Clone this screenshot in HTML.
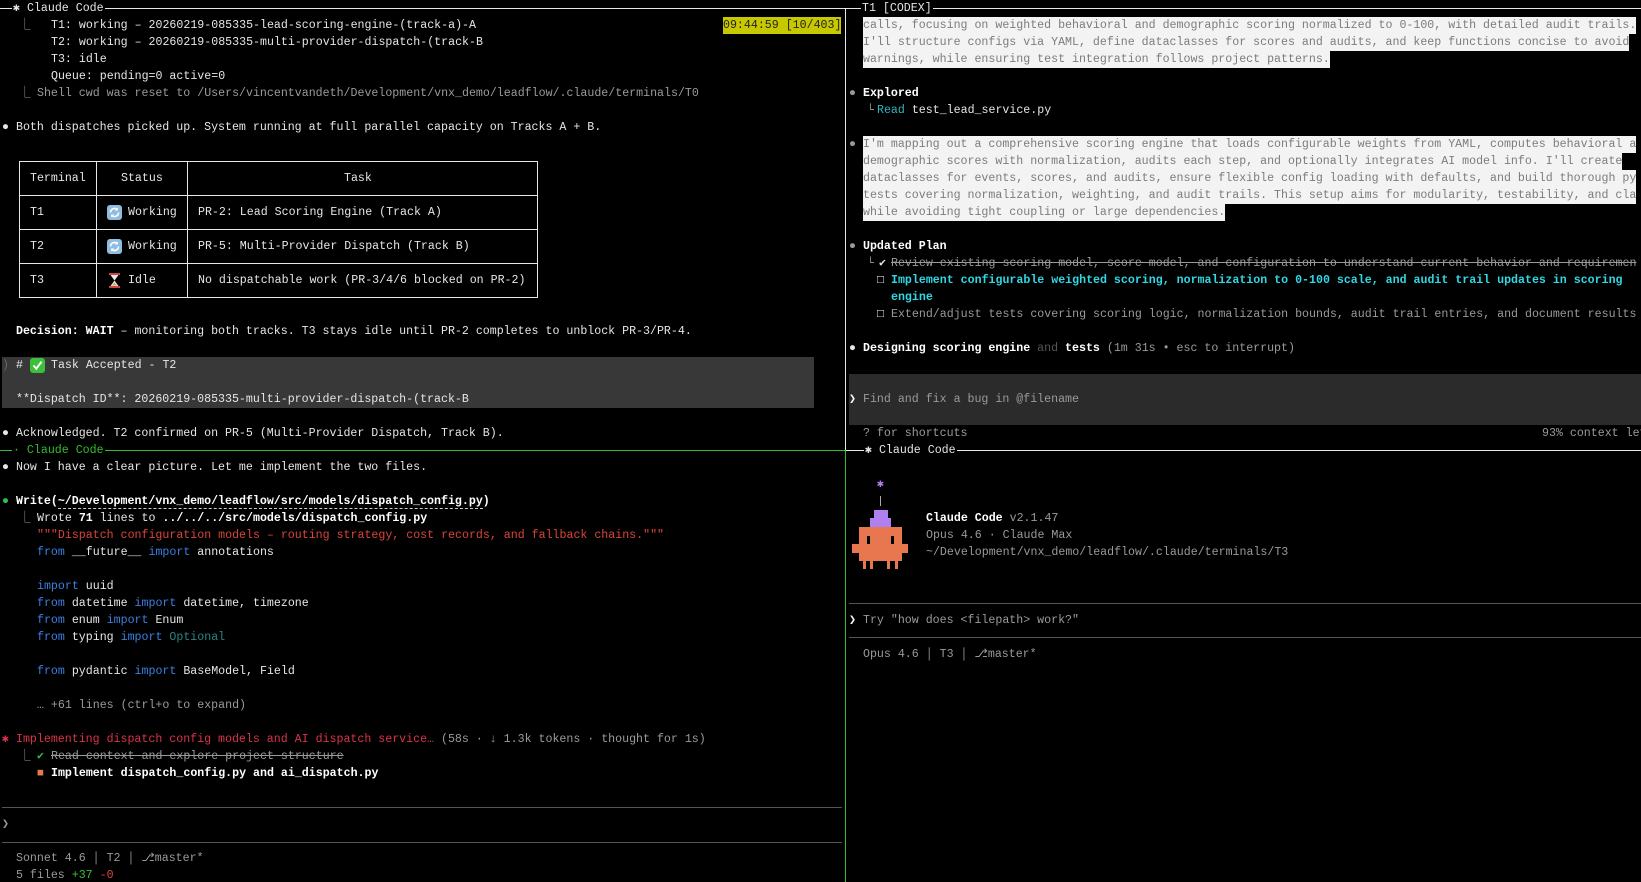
<!DOCTYPE html>
<html><head><meta charset="utf-8"><style>
html,body{margin:0;padding:0;background:#000;width:1641px;height:882px;overflow:hidden}
body{position:relative;font-family:"Liberation Mono","DejaVu Sans Mono",monospace;font-size:11.62px;color:#e6e6e6}
.l{position:absolute;white-space:pre;height:17px;line-height:17px}
.d{color:#9a9a9a}
.b{font-weight:bold;color:#fff}
.hl{background:#f3f3f3;color:#7c7c7c}
.kw{color:#3b7fe0}
.s{text-decoration:line-through}
.hr{position:absolute;height:1px}
.clip{position:absolute;overflow:hidden}
</style></head><body>

<div class="hr" style="left:0;top:8px;width:1641px;background:#e6e6e6"></div>
<div style="position:absolute;left:845px;top:8px;width:1px;height:442px;background:#e6e6e6"></div>
<div style="position:absolute;left:845px;top:450px;width:1px;height:432px;background:#2fbf2f"></div>
<div class="hr" style="left:0;top:450px;width:845px;background:#2fbf2f"></div>
<div class="hr" style="left:846px;top:450px;width:795px;background:#e6e6e6"></div>

<div class="l" style="left:12px;top:0;background:#000;padding:0 1px">✱ Claude Code</div>
<div class="l" style="left:861px;top:0;background:#000;padding:0 1px">T1 [CODEX]</div>
<div class="l" style="left:12px;top:442px;background:#000;color:#2fbf2f;padding:0 1px">· Claude Code</div>
<div class="l" style="left:864px;top:442px;background:#000;padding:0 1px">✱ Claude Code</div>

<div class="clip" style="left:0;top:9px;width:845px;height:440px">
<div style="position:relative;top:-9px">
<div class="l d" style="left:19px;top:17px">⎿</div>
<div class="l" style="left:51px;top:17px">T1: working – 20260219-085335-lead-scoring-engine-(track-a)-A</div>
<div class="l" style="left:723px;top:17px;background:#c8c800;color:#222">09:44:59 [10/403]</div>
<div class="l" style="left:51px;top:34px">T2: working – 20260219-085335-multi-provider-dispatch-(track-B</div>
<div class="l" style="left:51px;top:51px">T3: idle</div>
<div class="l" style="left:51px;top:68px">Queue: pending=0 active=0</div>
<div class="l d" style="left:19px;top:85px">⎿</div>
<div class="l d" style="left:37px;top:85px">Shell cwd was reset to /Users/vincentvandeth/Development/vnx_demo/leadflow/.claude/terminals/T0</div>
<div class="l" style="left:2px;top:119px">●</div>
<div class="l" style="left:16px;top:119px">Both dispatches picked up. System running at full parallel capacity on Tracks A + B.</div>

<div style="position:absolute;left:19px;top:161px;width:517px;height:135px;border:1px solid #e6e6e6"></div>
<div class="hr" style="left:19px;top:195px;width:518px;background:#e6e6e6"></div>
<div class="hr" style="left:19px;top:229px;width:518px;background:#e6e6e6"></div>
<div class="hr" style="left:19px;top:263px;width:518px;background:#e6e6e6"></div>
<div style="position:absolute;left:96px;top:161px;width:1px;height:136px;background:#e6e6e6"></div>
<div style="position:absolute;left:187px;top:161px;width:1px;height:136px;background:#e6e6e6"></div>
<div class="l" style="left:30px;top:170px">Terminal</div>
<div class="l" style="left:121px;top:170px">Status</div>
<div class="l" style="left:344px;top:170px">Task</div>
<div class="l" style="left:30px;top:204px">T1</div>
<div class="l" style="left:30px;top:238px">T2</div>
<div class="l" style="left:30px;top:272px">T3</div>
<svg style="position:absolute;left:107px;top:205px" width="15" height="15" viewBox="0 0 15 15"><rect width="15" height="15" rx="3" fill="#8fbde0"/><path d="M3.5 7.5a4 4 0 0 1 7-2.6M11.5 7.5a4 4 0 0 1-7 2.6" stroke="#fff" stroke-width="1.6" fill="none"/><path d="M10.8 2.5v3h-3z M4.2 12.5v-3h3z" fill="#fff"/></svg>
<svg style="position:absolute;left:107px;top:239px" width="15" height="15" viewBox="0 0 15 15"><rect width="15" height="15" rx="3" fill="#8fbde0"/><path d="M3.5 7.5a4 4 0 0 1 7-2.6M11.5 7.5a4 4 0 0 1-7 2.6" stroke="#fff" stroke-width="1.6" fill="none"/><path d="M10.8 2.5v3h-3z M4.2 12.5v-3h3z" fill="#fff"/></svg>
<svg style="position:absolute;left:108px;top:273px" width="13" height="15" viewBox="0 0 13 15"><rect x="1" y="0" width="11" height="2" fill="#c44"/><rect x="1" y="13" width="11" height="2" fill="#c44"/><path d="M2.5 2h8L6.5 7.5 10.5 13h-8l4-5.5z" fill="#e8e8e8"/><path d="M4 12.5h5l-2.5-3z" fill="#d9a35a"/></svg>
<div class="l" style="left:128px;top:204px">Working</div>
<div class="l" style="left:128px;top:238px">Working</div>
<div class="l" style="left:128px;top:272px">Idle</div>
<div class="l" style="left:198px;top:204px">PR-2: Lead Scoring Engine (Track A)</div>
<div class="l" style="left:198px;top:238px">PR-5: Multi-Provider Dispatch (Track B)</div>
<div class="l" style="left:198px;top:272px">No dispatchable work (PR-3/4/6 blocked on PR-2)</div>

<div class="l" style="left:16px;top:323px"><span class="b">Decision: WAIT</span> – monitoring both tracks. T3 stays idle until PR-2 completes to unblock PR-3/PR-4.</div>

<div style="position:absolute;left:2px;top:357px;width:812px;height:51px;background:#383838"></div>
<div class="l" style="left:2px;top:357px;color:#666">)</div>
<div class="l" style="left:16px;top:357px">#</div>
<svg style="position:absolute;left:30px;top:358px" width="15" height="15" viewBox="0 0 15 15"><rect width="15" height="15" rx="3" fill="#3cc03c"/><path d="M3.5 7.5l2.8 3.2 5.2-7" stroke="#fff" stroke-width="2" fill="none"/></svg>
<div class="l" style="left:51px;top:357px">Task Accepted - T2</div>
<div class="l" style="left:16px;top:391px">**Dispatch ID**: 20260219-085335-multi-provider-dispatch-(track-B</div>

<div class="l" style="left:2px;top:425px">●</div>
<div class="l" style="left:16px;top:425px">Acknowledged. T2 confirmed on PR-5 (Multi-Provider Dispatch, Track B).</div>
</div></div>

<div class="l" style="left:2px;top:459px">●</div>
<div class="l" style="left:16px;top:459px">Now I have a clear picture. Let me implement the two files.</div>
<div class="l" style="left:2px;top:493px;color:#2fbf4f">●</div>
<div class="l b" style="left:16px;top:493px">Write(<span style="border-bottom:1px dashed #ccc">~/Development/vnx_demo/leadflow/src/models/dispatch_config.py</span>)</div>
<div class="l d" style="left:19px;top:510px">⎿</div>
<div class="l" style="left:37px;top:510px">Wrote <span class="b">71</span> lines to <span class="b">../../../src/models/dispatch_config.py</span></div>
<div class="l" style="left:37px;top:527px;color:#d9453a">"""Dispatch configuration models – routing strategy, cost records, and fallback chains."""</div>
<div class="l" style="left:37px;top:544px"><span class="kw">from</span> __future__ <span class="kw">import</span> annotations</div>
<div class="l" style="left:37px;top:578px"><span class="kw">import</span> uuid</div>
<div class="l" style="left:37px;top:595px"><span class="kw">from</span> datetime <span class="kw">import</span> datetime, timezone</div>
<div class="l" style="left:37px;top:612px"><span class="kw">from</span> enum <span class="kw">import</span> Enum</div>
<div class="l" style="left:37px;top:629px"><span class="kw">from</span> typing <span class="kw">import</span> <span style="color:#2a8585">Optional</span></div>
<div class="l" style="left:37px;top:663px"><span class="kw">from</span> pydantic <span class="kw">import</span> BaseModel, Field</div>
<div class="l d" style="left:37px;top:697px">… +61 lines (ctrl+o to expand)</div>
<div class="l" style="left:2px;top:731px;color:#d8334a">✱</div>
<div class="l" style="left:16px;top:731px"><span style="color:#d8334a">Implementing dispatch config models and AI dispatch service…</span><span class="d"> (58s · ↓ 1.3k tokens · thought for 1s)</span></div>
<div class="l d" style="left:19px;top:748px">⎿</div>
<div class="l" style="left:37px;top:748px;color:#2fbf4f">✔</div>
<div class="l d s" style="left:51px;top:748px">Read context and explore project structure</div>
<div class="l" style="left:37px;top:765px;color:#e8764f">■</div>
<div class="l b" style="left:51px;top:765px">Implement dispatch_config.py and ai_dispatch.py</div>
<div class="hr" style="left:2px;top:807px;width:840px;background:#555"></div>
<div class="l d" style="left:2px;top:816px">❯</div>
<div class="hr" style="left:2px;top:842px;width:840px;background:#555"></div>
<div class="l d" style="left:16px;top:850px">Sonnet 4.6 │ T2 │ ⎇master*</div>
<div class="l d" style="left:16px;top:867px">5 files <span style="color:#3ac03a">+37</span> <span style="color:#d9453a">-0</span></div>

<div class="clip" style="left:846px;top:9px;width:795px;height:440px">
<div style="position:relative;left:-846px;top:-9px">
<div class="l hl" style="left:863px;top:17px">calls, focusing on weighted behavioral and demographic scoring normalized to 0-100, with detailed audit trails.</div>
<div class="l hl" style="left:863px;top:34px">I'll structure configs via YAML, define dataclasses for scores and audits, and keep functions concise to avoid</div>
<div class="l hl" style="left:863px;top:51px">warnings, while ensuring test integration follows project patterns.</div>
<div class="l d" style="left:849px;top:85px">●</div>
<div class="l b" style="left:863px;top:85px">Explored</div>
<div class="l d" style="left:867px;top:102px">└</div>
<div class="l" style="left:877px;top:102px"><span style="color:#2bb8c0">Read</span> test_lead_service.py</div>
<div class="l d" style="left:849px;top:136px">●</div>
<div class="l hl" style="left:863px;top:136px">I'm mapping out a comprehensive scoring engine that loads configurable weights from YAML, computes behavioral a</div>
<div class="l hl" style="left:863px;top:153px">demographic scores with normalization, audits each step, and optionally integrates AI model info. I'll create</div>
<div style="position:absolute;left:1626px;top:153px;width:15px;height:17px;background:#000"></div>
<div class="l hl" style="left:863px;top:170px">dataclasses for events, scores, and audits, ensure flexible config loading with defaults, and build thorough py</div>
<div class="l hl" style="left:863px;top:187px">tests covering normalization, weighting, and audit trails. This setup aims for modularity, testability, and cla</div>
<div class="l hl" style="left:863px;top:204px">while avoiding tight coupling or large dependencies.</div>
<div class="l d" style="left:849px;top:238px">●</div>
<div class="l b" style="left:863px;top:238px">Updated Plan</div>
<div class="l d" style="left:867px;top:255px">└</div>
<div class="l" style="left:879px;top:255px">✔</div>
<div class="l d s" style="left:891px;top:255px">Review existing scoring model, score model, and configuration to understand current behavior and requiremen</div>
<div class="l" style="left:877px;top:272px;color:#fff">□</div>
<div class="l" style="left:891px;top:272px;color:#2fd8e4;font-weight:bold">Implement configurable weighted scoring, normalization to 0-100 scale, and audit trail updates in scoring</div>
<div class="l" style="left:891px;top:289px;color:#2fd8e4;font-weight:bold">engine</div>
<div class="l" style="left:877px;top:306px;color:#fff">□</div>
<div class="l d" style="left:891px;top:306px">Extend/adjust tests covering scoring logic, normalization bounds, audit trail entries, and document results</div>
<div class="l" style="left:849px;top:340px">●</div>
<div class="l" style="left:863px;top:340px"><span class="b">Designing scoring engine</span><span style="color:#555"> and</span><span class="b"> tests</span><span class="d"> (1m 31s • esc to interrupt)</span></div>
<div style="position:absolute;left:849px;top:374px;width:792px;height:51px;background:#2b2b2b"></div>
<div class="l b" style="left:849px;top:391px">❯</div>
<div class="l d" style="left:863px;top:391px">Find and fix a bug in @filename</div>
<div class="l d" style="left:863px;top:425px">? for shortcuts</div>
<div class="l d" style="left:1542px;top:425px">93% context left</div>
</div></div>

<div class="l" style="left:877px;top:476px;color:#b07ff0">✱</div>
<div style="position:absolute;left:880px;top:496px;width:1px;height:10px;background:#aaa"></div>
<div style="position:absolute;left:874px;top:510px;width:14px;height:9px;background:#b07ff0"></div>
<div style="position:absolute;left:870px;top:518px;width:21px;height:9px;background:#b07ff0"></div>
<div style="position:absolute;left:859px;top:527px;width:43px;height:34px;background:#e8764f"></div>
<div style="position:absolute;left:852px;top:544px;width:56px;height:9px;background:#e8764f"></div>
<div style="position:absolute;left:867px;top:536px;width:3px;height:8px;background:#000"></div>
<div style="position:absolute;left:891px;top:536px;width:3px;height:8px;background:#000"></div>
<div style="position:absolute;left:863px;top:560px;width:3px;height:9px;background:#e8764f"></div>
<div style="position:absolute;left:870px;top:560px;width:3px;height:9px;background:#e8764f"></div>
<div style="position:absolute;left:887px;top:560px;width:3px;height:9px;background:#e8764f"></div>
<div style="position:absolute;left:895px;top:560px;width:3px;height:9px;background:#e8764f"></div>
<div class="l" style="left:926px;top:510px"><span class="b">Claude Code</span><span class="d"> v2.1.47</span></div>
<div class="l d" style="left:926px;top:527px">Opus 4.6 · Claude Max</div>
<div class="l d" style="left:926px;top:544px">~/Development/vnx_demo/leadflow/.claude/terminals/T3</div>
<div class="hr" style="left:849px;top:603px;width:792px;background:#555"></div>
<div class="l b" style="left:849px;top:612px">❯</div>
<div class="l d" style="left:863px;top:612px">Try "how does &lt;filepath&gt; work?"</div>
<div class="hr" style="left:849px;top:637px;width:792px;background:#555"></div>
<div class="l d" style="left:863px;top:646px">Opus 4.6 │ T3 │ ⎇master*</div>
</body></html>
